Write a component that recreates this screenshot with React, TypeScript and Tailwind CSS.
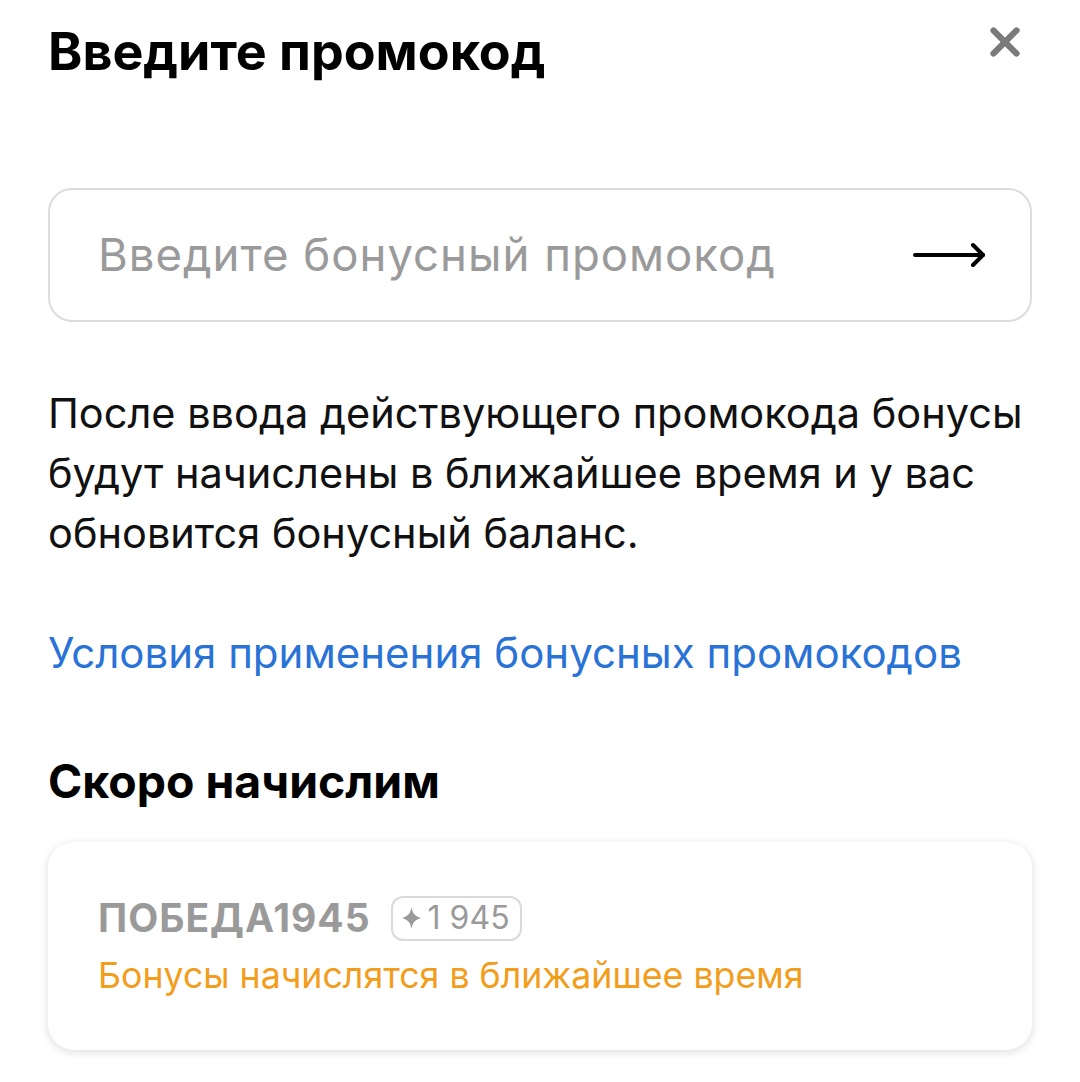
import { X } from 'lucide-react';

const font = { fontFamily: 'Inter, "Noto Sans", sans-serif' };

function ArrowRight() {
  return (
    <svg width="76" height="30" viewBox="0 0 76 30" fill="none" stroke="currentColor" strokeWidth="4" strokeLinecap="round" strokeLinejoin="round">
      <path d="M3 15h68" />
      <path d="M61 5l10 10-10 10" />
    </svg>
  );
}

function Sparkle() {
  return (
    <svg width="19" height="22" viewBox="0 0 19 22" fill="currentColor">
      <path d="M9.5 0C10.4 6 12.6 9.2 19 11C12.6 12.8 10.4 16 9.5 22C8.6 16 6.4 12.8 0 11C6.4 9.2 8.6 6 9.5 0Z" />
    </svg>
  );
}

export default function App() {
  return (
    <div className="min-h-screen w-[1080px] bg-white px-12 text-black" style={font}>
      <header className="flex items-start justify-between pt-[22px]">
        <h1 className="text-[52px] font-bold leading-[60px]">Введите промокод</h1>
        <button type="button" className="mr-[4px] mt-[-3px] text-[#7a7a7a]" aria-label="Закрыть">
          <X className="h-[46px] w-[46px]" strokeWidth={3.2} />
        </button>
      </header>

      <div className="mt-[106px] flex h-[134px] items-center rounded-[24px] border-2 border-[#dcdcdc] pl-[48px] pr-[42px]">
        <input
          className="min-w-0 flex-1 bg-transparent text-[45.5px] tracking-[1px] text-black outline-none placeholder:text-[#9a9a9a]"
          placeholder="Введите бонусный промокод"
        />
        <button type="button" className="text-black" aria-label="Применить">
          <ArrowRight />
        </button>
      </div>

      <p className="mt-[61px] text-[41.5px] leading-[60px] text-[#111]">
        После ввода действующего промокода бонусы будут начислены в ближайшее время и у вас обновится бонусный баланс.
      </p>

      <a href="#" className="mt-[60px] block text-[42px] leading-[60px] text-[#2a73d6]">
        Условия применения бонусных промокодов
      </a>

      <h2 className="mt-[68px] text-[46.4px] font-bold leading-[60px]">Скоро начислим</h2>

      <div className="mt-[31px] rounded-[26px] bg-white px-[50px] pb-[52px] pt-[52px] shadow-[0_2px_10px_rgba(0,0,0,0.14)]">
        <div className="flex items-center gap-[20px]">
          <span className="text-[39px] font-bold leading-[48px] tracking-[1px] text-[#9a9a9a]">ПОБЕДА1945</span>
          <span className="flex h-[45px] items-center gap-[7px] rounded-[12px] border-2 border-[#dadada] pl-[9px] pr-[10px] text-[32px] text-[#9a9a9a]">
            <Sparkle />
            1 945
          </span>
        </div>
        <p className="mt-[10px] text-[35.7px] leading-[46px] text-[#f29d1c]">Бонусы начислятся в ближайшее время</p>
      </div>
    </div>
  );
}
